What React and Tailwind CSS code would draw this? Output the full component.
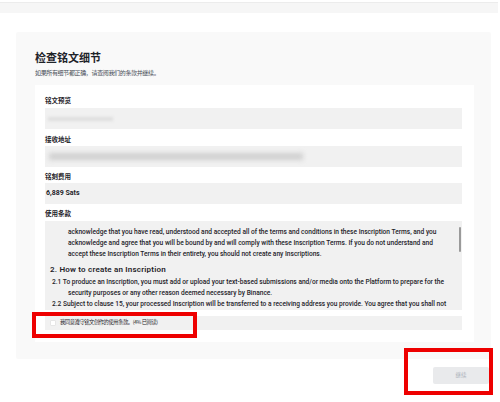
import React from "react";

const cjk = { fontFamily: '"Noto Sans CJK SC", "Noto Sans", sans-serif' };
const latin = { fontFamily: 'Roboto, "Liberation Sans", "Noto Sans CJK SC", sans-serif' };

function Label({ children, className = "" }) {
  return (
    <div className={"text-[6.5px] leading-[10px] font-bold text-[#1e2329] " + className} style={cjk}>
      {children}
    </div>
  );
}

export default function App() {
  return (
    <div className="relative w-[500px] h-[402px] bg-white overflow-hidden">
      {/* top strip */}
      <div className="mt-[2px] w-[498px] h-[11px] bg-[#f6f6f6] border-t border-[#ececec]"></div>

      {/* outer card */}
      <div className="ml-[16px] mt-[19px] w-[475px] bg-[#f9f9f9] rounded-[2px] pl-[19px] pr-[17px] pt-[18px] pb-[17px]">
        <h1 className="text-[11px] leading-[14px] font-bold text-[#1e2329]" style={cjk}>
          检查铭文细节
        </h1>
        <p className="mt-[4px] text-[6px] leading-[10px] tracking-[-0.35px] text-[#474d57]" style={cjk}>
          如果所有细节都正确，请查阅我们的条款并继续。
        </p>

        {/* inner card */}
        <div className="mt-[7px] bg-white pl-[10px] pr-[12px] pt-[10px] pb-[12px]">
          <Label>铭文预览</Label>
          <div className="mt-[3px] h-[21px] bg-[#f1f1f1] flex items-center pl-[3px]">
            <div className="w-[65px] h-[4px] bg-[#dedede] blur-[1.5px]"></div>
          </div>

          <Label className="mt-[5px]">接收地址</Label>
          <div className="mt-[2px] h-[21px] bg-[#f1f1f1] flex items-center pl-[4px]">
            <div className="w-[254px] h-[7px] bg-[#cfcfcf] blur-[2.5px]"></div>
          </div>

          <Label className="mt-[4px]">铭刻费用</Label>
          <div className="mt-[2px] h-[21px] bg-[#f1f1f1] flex items-center pl-[1px]">
            <span className="text-[7px] font-bold text-[#1e2329]" style={latin}>6,889 Sats</span>
          </div>

          <Label className="mt-[4px]">使用条款</Label>
          <div
            className="relative mt-[3px] h-[89px] bg-[#f1f1f1] overflow-hidden pt-[6px] text-[#1e2329] whitespace-nowrap"
            style={latin}
          >
            <div className="pl-[23px] text-[6.6px] leading-[11px] font-medium">
              <div>acknowledge that you have read, understood and accepted all of the terms and conditions in these Inscription Terms, and you</div>
              <div>acknowledge and agree that you will be bound by and will comply with these Inscription Terms. If you do not understand and</div>
              <div>accept these Inscription Terms in their entirety, you should not create any Inscriptions.</div>
            </div>
            <div className="mt-[3px] pl-[5px] text-[8px] leading-[14px] tracking-[0.2px] font-semibold">
              2. How to create an Inscription
            </div>
            <div className="text-[6.6px] leading-[11px] font-medium">
              <div className="pl-[7px]">2.1 To produce an Inscription, you must add or upload your text-based submissions and/or media onto the Platform to prepare for the</div>
              <div className="pl-[23px]">security purposes or any other reason deemed necessary by Binance.</div>
              <div className="pl-[7px]">2.2 Subject to clause 15, your processed Inscription will be transferred to a receiving address you provide. You agree that you shall not</div>
            </div>
            <div className="absolute right-[1px] top-[6px] w-[2px] h-[25px] bg-[#9a9a9a] rounded-full"></div>
          </div>

          <label className="mt-[6px] h-[14px] bg-[#f1f1f1] flex items-center pl-[5px] gap-[4px]">
            <span className="w-[6px] h-[6px] bg-white border border-[#e6e6e6] rounded-[1px]"></span>
            <span className="text-[5.3px] leading-none tracking-[-0.45px] text-[#1e2329]" style={cjk}>
              我同意遵守铭文创作的使用条款。(4% 已阅读)
            </span>
          </label>
        </div>
      </div>

      <div className="flex justify-end pr-[11px] mt-[8px]">
        <button
          className="w-[56px] h-[17px] bg-[#e9eaec] rounded-[2px] text-[5.5px] text-[#aeb4bc]"
          style={cjk}
        >
          继续
        </button>
      </div>

      {/* annotation boxes */}
      <div className="absolute left-[32px] top-[312px] w-[165px] h-[26px] border-[4px] border-[#ee0000]"></div>
      <div className="absolute left-[404px] top-[348px] w-[89px] h-[47px] border-[4px] border-[#ee0000]"></div>
    </div>
  );
}
